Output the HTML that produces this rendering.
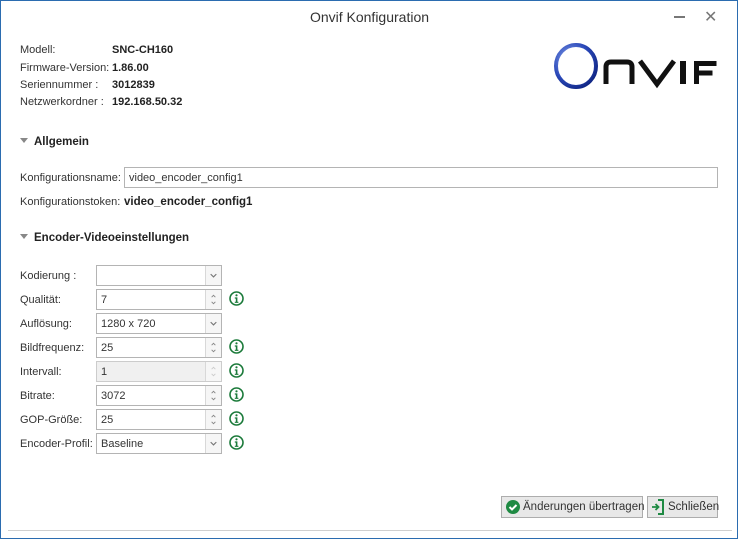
<!DOCTYPE html>
<html><head><meta charset="utf-8"><style>
*{margin:0;padding:0;box-sizing:border-box}
body{width:739px;height:539px;background:#fff;font-family:"Liberation Sans",sans-serif;font-size:11px;color:#333;position:relative;overflow:hidden}
.win{position:absolute;left:0;top:0;width:738px;height:539px;border:1px solid #2b6cb0}
.a{position:absolute;white-space:nowrap}
.b{font-weight:bold;color:#222}
.title{left:0;width:739px;top:9px;text-align:center;font-size:14px;color:#333}
.box{position:absolute;left:96px;width:126px;height:21px;border:1px solid #b4b4b4;background:#fff;padding:4px 0 0 4px}
.btnr{position:absolute;right:0;top:0;width:16px;height:19px;border-left:1px solid #d8d8d8;background:#f6f6f6}
.info{position:absolute;left:229px;width:15px;height:15px}
.tri{display:inline-block;width:0;height:0;border-left:4px solid transparent;border-right:4px solid transparent;border-top:5px solid #888;margin-right:6px;vertical-align:2px}
.btn{position:absolute;top:496px;height:22px;border:1px solid #adadad;background:#e8e8e8;padding:4px 0 0 0;font-size:11.5px;color:#333;white-space:nowrap}
</style></head><body>
<svg width="0" height="0" style="position:absolute">
<symbol id="i" viewBox="0 0 15 15"><circle cx="7.5" cy="7.5" r="6.5" fill="none" stroke="#1b7a3a" stroke-width="1.6"/><circle cx="7.5" cy="4.3" r="1.1" fill="#1b7a3a"/><path d="M5.8 6.4h2.6v4.3h1v1.2H5.8v-1.2h1v-3.1h-1z" fill="#1b7a3a"/></symbol>
<symbol id="dd" viewBox="0 0 16 19"><path d="M5 8l3 3 3-3" stroke="#777" stroke-width="1.2" fill="none"/></symbol>
<symbol id="sp" viewBox="0 0 16 19"><path d="M6 7l2-2 2 2M6 12l2 2 2-2" stroke="#888" stroke-width="1" fill="none"/></symbol>
<symbol id="spd" viewBox="0 0 16 19"><path d="M6 7l2-2 2 2M6 12l2 2 2-2" stroke="#ccc" stroke-width="1" fill="none"/></symbol>
</svg>
<div class="win"></div>
<div class="a title">Onvif Konfiguration</div>
<div class="a" style="left:674px;top:16px;width:11px;height:2px;background:#777"></div>
<div class="a" style="left:704px;top:7px;font-size:16px;color:#777">✕</div>

<div class="a" style="left:20px;top:44px">Modell:</div><div class="a b" style="left:112px;top:44px">SNC-CH160</div>
<div class="a" style="left:20px;top:62px">Firmware-Version:</div><div class="a b" style="left:112px;top:62px">1.86.00</div>
<div class="a" style="left:20px;top:79px">Seriennummer :</div><div class="a b" style="left:112px;top:79px">3012839</div>
<div class="a" style="left:20px;top:96px">Netzwerkordner :</div><div class="a b" style="left:112px;top:96px">192.168.50.32</div>

<svg class="a" style="left:552px;top:40px" width="170" height="52" viewBox="0 0 170 52">
<defs><radialGradient id="g" cx="0.35" cy="0.35" r="0.8"><stop offset="0" stop-color="#8aa6f0"/><stop offset="0.6" stop-color="#2a48b8"/><stop offset="1" stop-color="#0b1f7a"/></radialGradient></defs>
<ellipse cx="24" cy="26" rx="20" ry="21" fill="none" stroke="url(#g)" stroke-width="4"/>
<path d="M54 44V27q0-5 5-5h16q5 0 5 5v17" stroke="#111" stroke-width="5" fill="none"/>
<path d="M88 21l17 23 17-23" stroke="#111" stroke-width="5" fill="none"/>
<rect x="128" y="21" width="6" height="23" fill="#111"/>
<path d="M144.5 44V23.5h20M144.5 33h16" stroke="#111" stroke-width="5" fill="none"/>
</svg>

<div class="a b" style="left:20px;top:136px;font-size:11.5px"><span class="tri"></span>Allgemein</div>
<div class="a" style="left:20px;top:172px">Konfigurationsname:</div>
<div class="a" style="left:124px;top:167px;width:594px;height:21px;border:1px solid #b4b4b4;padding:4px 4px">video_encoder_config1</div>
<div class="a" style="left:20px;top:196px">Konfigurationstoken:</div><div class="a b" style="left:124px;top:196px;font-size:11.5px">video_encoder_config1</div>
<div class="a b" style="left:20px;top:232px;font-size:11.5px"><span class="tri"></span>Encoder-Videoeinstellungen</div>

<div class="a" style="left:20px;top:270px">Kodierung :</div>
<div class="box" style="top:265px"><svg class="btnr"><use href="#dd"/></svg></div>
<div class="a" style="left:20px;top:294px">Qualität:</div>
<div class="box" style="top:289px">7<svg class="btnr"><use href="#sp"/></svg></div>
<div class="a" style="left:20px;top:318px">Auflösung:</div>
<div class="box" style="top:313px">1280 x 720<svg class="btnr"><use href="#dd"/></svg></div>
<div class="a" style="left:20px;top:342px">Bildfrequenz:</div>
<div class="box" style="top:337px">25<svg class="btnr"><use href="#sp"/></svg></div>
<div class="a" style="left:20px;top:366px">Intervall:</div>
<div class="box" style="top:361px;background:#f0f0f0;border-color:#ccc">1<svg class="btnr"><use href="#spd"/></svg></div>
<div class="a" style="left:20px;top:390px">Bitrate:</div>
<div class="box" style="top:385px">3072<svg class="btnr"><use href="#sp"/></svg></div>
<div class="a" style="left:20px;top:414px">GOP-Größe:</div>
<div class="box" style="top:409px">25<svg class="btnr"><use href="#sp"/></svg></div>
<div class="a" style="left:20px;top:438px">Encoder-Profil:</div>
<div class="box" style="top:433px">Baseline<svg class="btnr"><use href="#dd"/></svg></div>

<svg class="info" style="top:291px"><use href="#i"/></svg>
<svg class="info" style="top:339px"><use href="#i"/></svg>
<svg class="info" style="top:363px"><use href="#i"/></svg>
<svg class="info" style="top:387px"><use href="#i"/></svg>
<svg class="info" style="top:411px"><use href="#i"/></svg>
<svg class="info" style="top:435px"><use href="#i"/></svg>

<div class="btn" style="left:501px;width:142px;padding-left:21px">Änderungen übertragen
<svg style="position:absolute;left:4px;top:3px" width="14" height="14"><circle cx="7" cy="7" r="7" fill="#1f8a43"/><path d="M3.5 7l2.5 2.5 4.5-4.5" stroke="#fff" stroke-width="2" fill="none"/></svg></div>
<div class="btn" style="left:647px;width:71px;padding-left:20px">Schließen
<svg style="position:absolute;left:3px;top:2px" width="14" height="16"><path d="M7 1h5v14H7" stroke="#1f8a43" stroke-width="2" fill="none"/><path d="M1 8h6M4.5 5l3 3-3 3" stroke="#1f8a43" stroke-width="1.8" fill="none"/></svg></div>

<div class="a" style="left:8px;top:530px;width:724px;height:1px;background:#d0d0d0"></div>
</body></html>
